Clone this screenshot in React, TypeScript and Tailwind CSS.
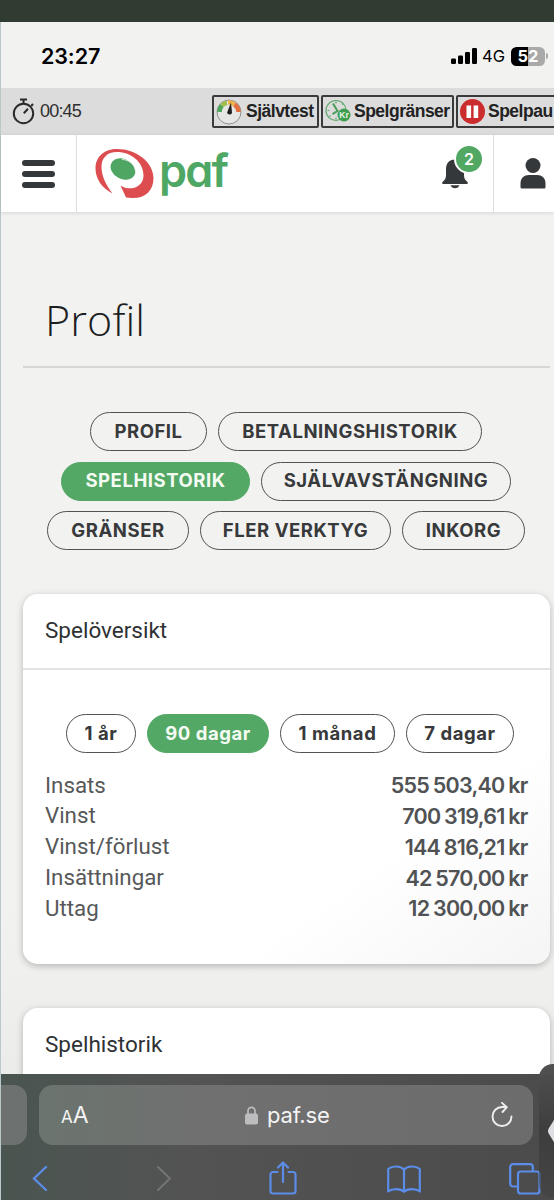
import clsx from "clsx";
import type { ReactNode } from "react";

type Pill = { label: string; width: string; active?: boolean };

const menuRows: Pill[][] = [
  [
    { label: "PROFIL", width: "w-[117px]" },
    { label: "BETALNINGSHISTORIK", width: "w-[264px]" },
  ],
  [
    { label: "SPELHISTORIK", width: "w-[189px]", active: true },
    { label: "SJÄLVAVSTÄNGNING", width: "w-[250px]" },
  ],
  [
    { label: "GRÄNSER", width: "w-[142px]" },
    { label: "FLER VERKTYG", width: "w-[191px]" },
    { label: "INKORG", width: "w-[123px]" },
  ],
];

const periods: Pill[] = [
  { label: "1 år", width: "w-[70px]" },
  { label: "90 dagar", width: "w-[122px]", active: true },
  { label: "1 månad", width: "w-[115px]" },
  { label: "7 dagar", width: "w-[108px]" },
];

const totals = [
  { label: "Insats", value: "555 503,40 kr" },
  { label: "Vinst", value: "700 319,61 kr" },
  { label: "Vinst/förlust", value: "144 816,21 kr" },
  { label: "Insättningar", value: "42 570,00 kr" },
  { label: "Uttag", value: "12 300,00 kr" },
];

function PillButton({ label, width, active }: Pill) {
  return (
    <button
      className={clsx(
        "flex h-[39px] shrink-0 items-center justify-center rounded-full border-[1.5px] font-['Inter',sans-serif] text-[18.5px] font-[650] tracking-[0.55px] whitespace-nowrap",
        width,
        active
          ? "border-[#53a866] bg-[#53a866] text-[#f3fbf3]"
          : "border-[#505352] text-[#37393b]"
      )}
    >
      {label}
    </button>
  );
}

function StatusBar() {
  return (
    <div className="flex h-[66px] items-center justify-between bg-[#f2f2f1] pt-[2px] pr-[6px] pl-[40px] text-black">
      <span className="font-['Inter',sans-serif] text-[21.5px] font-semibold tracking-[-0.1px]">
        23:27
      </span>
      <div className="flex items-center">
        <svg width="26" height="17" viewBox="0 0 26 17" fill="currentColor">
          <rect x="0" y="10.5" width="5" height="5.5" rx="1.2" />
          <rect x="7" y="7.5" width="5" height="8.5" rx="1.2" />
          <rect x="14" y="4" width="5" height="12" rx="1.2" />
          <rect x="21" y="0" width="5" height="16" rx="1.2" />
        </svg>
        <span className="ml-[5px] font-['Inter',sans-serif] text-[16.5px]">4G</span>
        <div className="ml-[6px] flex h-[19px] w-[34px] items-center justify-center rounded-[5.5px] bg-linear-to-r from-black from-50% to-[#a9a9a9] to-50% font-['Inter',sans-serif] text-[16.5px] leading-none font-bold text-white">
          52
        </div>
        <div className="ml-[1px] h-[6px] w-[2px] rounded-r-full bg-[#a9a9a9]" />
      </div>
    </div>
  );
}

function ToolButton({ icon, label, width }: { icon: ReactNode; label: string; width: string }) {
  return (
    <div
      className={clsx(
        "flex h-[33px] shrink-0 items-center gap-[4px] rounded-[2px] border-2 border-[#3a3a3a] pl-[2px] font-['Liberation_Sans',sans-serif] text-[17.5px] font-bold tracking-[-0.5px] whitespace-nowrap text-[#222]",
        width
      )}
    >
      {icon}
      {label}
    </div>
  );
}

function GaugeIcon() {
  return (
    <svg className="shrink-0" width="26" height="26" viewBox="0 0 26 26" fill="none">
      <circle cx="13" cy="13" r="12" fill="#e6e6e4" stroke="#8f8f8f" strokeWidth="1" />
      <path d="M3.5 13A9.5 9.5 0 0 1 6 6.5" stroke="#4da659" strokeWidth="4.5" />
      <path d="M6 6.5A9.5 9.5 0 0 1 11 3.8" stroke="#9fbe4d" strokeWidth="4.5" />
      <path d="M12 3.6A9.5 9.5 0 0 1 18.5 5.5" stroke="#f0b44c" strokeWidth="4.5" />
      <path d="M18.5 5.5A9.5 9.5 0 0 1 22.5 13" stroke="#e2703f" strokeWidth="4.5" />
      <path d="M15 3.5l1 10.200a2.500 2.500 0 0 1-4.900-.2z" fill="#1d1d1d" />
    </svg>
  );
}

function LimitIcon() {
  return (
    <svg className="-mr-px shrink-0" width="26" height="25" viewBox="0 0 26 25" fill="none">
      <circle cx="11" cy="11.5" r="10" stroke="#5fa86d" strokeWidth="1.2" />
      <path d="M11 2.5v2M2.5 11.5h2M11 18.5v2M17 5.5l1-1M4.5 17.5l1-1" stroke="#5fa86d" strokeWidth="1.2" />
      <path d="M8 4.500l4.500 7.500-5 3.200" stroke="#4b9d5b" strokeWidth="2" />
      <circle cx="19" cy="16" r="6.500" fill="#3f9d50" />
      <text x="19" y="19" textAnchor="middle" className="font-['Liberation_Sans',sans-serif] text-[8.5px] font-bold tracking-normal" fill="#e9f5ea">
        Kr
      </text>
    </svg>
  );
}

function PauseIcon() {
  return (
    <svg className="-mr-px shrink-0" width="25" height="25" viewBox="0 0 25 25">
      <circle cx="12.5" cy="12.5" r="12.5" fill="#cb2d2f" />
      <rect x="6.5" y="6.5" width="4.6" height="12.5" fill="#fff" />
      <rect x="13.6" y="6.5" width="4.6" height="12.5" fill="#fff" />
    </svg>
  );
}

function ToolBar() {
  return (
    <div className="flex h-[47px] items-center bg-[#dcdcdc] pl-[11px]">
      <svg className="shrink-0" width="23" height="27" viewBox="0 0 23 27" fill="none" stroke="#2a2a2a" strokeWidth="2">
        <circle cx="11.5" cy="15.5" r="9.7" />
        <path d="M8 1.5h7M11.5 1.5v4M19.2 8l1.8-2M11.8 15.2l4.2-4.4" />
      </svg>
      <span className="w-[177px] shrink-0 pl-[5px] font-['Liberation_Sans',sans-serif] text-[18px] tracking-[-0.8px] text-[#2f2f2f]">
        00:45
      </span>
      <div className="flex gap-[2px]">
        <ToolButton icon={<GaugeIcon />} label="Självtest" width="w-[107px]" />
        <ToolButton icon={<LimitIcon />} label="Spelgränser" width="w-[133px]" />
        <ToolButton icon={<PauseIcon />} label="Spelpau" width="w-[120px]" />
      </div>
    </div>
  );
}

function Logo() {
  return (
    <div className="flex items-start">
      <svg className="mt-[13px]" width="60" height="51" viewBox="0 0 60 51">
        <path
          d="M17.500 45.500C7 40 .5 31 .5 20.500C.5 8 10 1 22 1C41 1 58.500 14 58.500 30C58.500 43 50 50.500 37 50L31 49.500L25.500 37.500C29 40 33 40.500 37 40.200C44 39.500 48.500 34 48.500 27.500C48.500 14 36 4 22 4C12 4 6.500 10 6.500 19C6.500 28 11 37 17.500 45.500Z"
          fill="#dd4d4f"
        />
        <ellipse cx="28" cy="21" rx="13" ry="10" transform="rotate(28 28 21)" fill="#4fa663" />
        <path d="M27 11.500c7 0 13 5 13.500 12" fill="none" stroke="#fff" strokeWidth="0.800" />
      </svg>
      <span className="ml-[4px] font-['Inter',sans-serif] text-[45px] leading-[71px] font-[560] tracking-[-1.8px] text-[#4fa765] [font-feature-settings:'cv11']">
        paf
      </span>
    </div>
  );
}

function Header() {
  return (
    <header className="z-10 flex h-[77px] bg-white shadow-[0_1px_4px_rgba(0,0,0,0.12)]">
      <div className="flex w-[76px] flex-col items-start gap-[5.5px] border-r-[1.5px] border-[#dedede] pt-[25px] pl-[21px]">
        <div className="h-[5.5px] w-[33px] rounded-full bg-[#35383b]" />
        <div className="h-[5.5px] w-[33px] rounded-full bg-[#35383b]" />
        <div className="h-[5.5px] w-[33px] rounded-full bg-[#35383b]" />
      </div>
      <div className="flex-1 pl-[18px]">
        <Logo />
      </div>
      <div className="relative w-[53px] shrink-0 border-r-[1.5px] border-[#dedede]">
        <svg className="mt-[22px] ml-px" width="27" height="32" viewBox="0 0 27 32" fill="#35383b">
          <path d="M13 2.500C7 2.500 4 6.500 4 12v6c0 3.500-1.200 5-3 6.500-1.400 1.200-1 2.500.6 2.500h22.800c1.600 0 2-1.300.6-2.500-1.800-1.500-3-3-3-6.500v-6c0-5.500-3-9.500-9-9.500z" />
          <path d="M8.500 28.300h9c-.8 2-2.400 3-4.500 3s-3.700-1-4.500-3z" />
        </svg>
        <div className="absolute top-[9px] left-[13px] flex size-[30px] items-center justify-center rounded-full border-2 border-white bg-[#50a863] font-['Inter',sans-serif] text-[16px] font-semibold text-white">
          2
        </div>
      </div>
      <div className="w-[60px] shrink-0 pt-[23px] pl-[26px]">
        <svg width="26" height="31" viewBox="0 0 26 31" fill="#35383b">
          <circle cx="13" cy="7.500" r="7.500" />
          <path d="M.5 29v-3.500C.5 20 4 17 9 17h8c5 0 8.500 3 8.500 8.500V29c0 1-.6 1.600-1.600 1.600H2.100C1.100 30.600.5 30 .5 29z" />
        </svg>
      </div>
    </header>
  );
}

function Card({ title, className, children }: { title: string; className?: string; children?: ReactNode }) {
  return (
    <section
      className={clsx(
        "rounded-[15px] bg-linear-to-br from-white from-70% to-[#f5f5f6] shadow-[0_2px_7px_rgba(0,0,0,0.25)]",
        className
      )}
    >
      <h2 className="flex h-[76px] items-center border-b-2 border-[#e3e3e3] pb-px pl-[22.5px] font-['Roboto',sans-serif] text-[22.5px] text-[#2e3133]">
        {title}
      </h2>
      {children}
    </section>
  );
}

function Profile() {
  return (
    <main className="h-[862px] overflow-hidden bg-linear-to-b from-[#f2f2f0] from-80% to-[#ececeb] pr-[4.5px] pl-[21.5px]">
      <h1 className="flex h-[156px] items-end border-b-2 border-[#d6d7d6] pb-[19px] pl-[22.5px] font-['Open_Sans',sans-serif] text-[43px] leading-[54px] font-[340] tracking-[0.1px] text-[#1d1e1f]">
        Profil
      </h1>
      <nav className="mt-[44px] flex flex-col items-center gap-[10.5px]">
        {menuRows.map((row, i) => (
          <div key={i} className="flex gap-[11px]">
            {row.map((pill) => (
              <PillButton key={pill.label} {...pill} />
            ))}
          </div>
        ))}
      </nav>
      <Card title="Spelöversikt" className="mt-[44px] h-[370px]">
        <div className="mt-[44px] flex justify-center gap-[11px] pl-[8px]">
          {periods.map((pill) => (
            <PillButton key={pill.label} {...pill} />
          ))}
        </div>
        <dl className="mt-[17px] pr-[22px] pl-[22.5px] font-['Roboto',sans-serif] text-[22.3px] text-[#565859]">
          {totals.map((row) => (
            <div key={row.label} className="flex h-[30.8px] items-center justify-between">
              <dt>{row.label}</dt>
              <dd className="font-['Inter',sans-serif] text-[21.5px] font-[640] tracking-[-0.75px] text-[#505254] [word-spacing:-1px]">
                {row.value}
              </dd>
            </div>
          ))}
        </dl>
      </Card>
      <Card title="Spelhistorik" className="mt-[44px] h-[200px]" />
    </main>
  );
}

function BrowserBar() {
  return (
    <footer className="h-[126px] bg-linear-to-r from-[#4a5550] via-[#535353] via-35% to-[#4b4b4b]">
      <div className="flex gap-[12px] pt-[11px]">
        <div className="h-[60px] w-[26px] rounded-r-[13px] bg-[#6d716f]" />
        <div className="flex h-[60px] w-[494px] items-center rounded-[14px] bg-linear-to-r from-[#6b746e] via-[#707070] via-35% to-[#6c6c6c] pr-[20px] pl-[22px] font-['Inter',sans-serif] text-[#f4f4f4]">
          <div className="flex w-[184px] items-baseline">
            <span className="text-[17px]">A</span>
            <span className="text-[23px]">A</span>
          </div>
          <svg width="13" height="19" viewBox="0 0 13 19">
            <rect x="0" y="7.500" width="13" height="11" rx="2" fill="#bdbdbf" />
            <path d="M3 8V4.800a3.500 3.500 0 0 1 7 0V8" fill="none" stroke="#bdbdbf" strokeWidth="1.700" />
          </svg>
          <span className="ml-[9px] flex-1 text-[22px] tracking-[-0.2px]">paf.se</span>
          <svg width="22" height="26" viewBox="0 0 22 26" fill="none" stroke="#eee" strokeWidth="1.900" strokeLinecap="round" strokeLinejoin="round">
            <path d="M20.500 14.500A9.500 9.500 0 1 1 11 5h4.500" />
            <path d="M11 .9l4.700 4.400L11.500 10" />
          </svg>
        </div>
      </div>
      <div className="flex items-start pt-[16px] pl-[31px]">
        <svg width="16" height="26" viewBox="0 0 16 26" className="mt-[4px]" fill="none" stroke="#5b8de8" strokeWidth="2.300" strokeLinecap="round">
          <path d="M14 2L2 13.500 14 25" />
        </svg>
        <svg width="16" height="26" viewBox="0 0 16 26" className="mt-[4px] ml-[108px]" fill="none" stroke="#747474" strokeWidth="2" strokeLinecap="round">
          <path d="M2 2l12 11.500L2 25" />
        </svg>
        <svg width="28" height="34" viewBox="0 0 28 34" className="ml-[97px]" fill="none" stroke="#5b8de8" strokeWidth="2.200" strokeLinecap="round" strokeLinejoin="round">
          <path d="M8.500 11H4a2.500 2.500 0 0 0-2.500 2.500V30A2.500 2.500 0 0 0 4 32.500h20a2.500 2.500 0 0 0 2.500-2.500V13.500A2.500 2.500 0 0 0 24 11h-4.500" />
          <path d="M14 21V2M9 6.500l5-5 5 5" />
        </svg>
        <svg width="34" height="28" viewBox="0 0 34 28" className="mt-[4px] ml-[90px]" fill="none" stroke="#5b8de8" strokeWidth="2.200" strokeLinejoin="round">
          <path d="M17 4.500C13.500.8 5.500.4 1.200 4v22.500c4.300-3.300 12.300-3 15.800.3 3.500-3.300 11.500-3.600 15.800-.3V4C28.500.4 20.500.8 17 4.500zM17 4.500v22" />
        </svg>
        <svg width="32" height="32" viewBox="0 0 32 32" className="mt-[2px] ml-[88px]" fill="none" stroke="#5b8de8" strokeWidth="2.200">
          <path d="M9 23.500H4A2.800 2.800 0 0 1 1.200 20.700V4A2.800 2.800 0 0 1 4 1.200h17A2.800 2.800 0 0 1 23.800 4v4" />
          <rect x="9" y="8.500" width="21.500" height="22" rx="2.800" />
        </svg>
      </div>
    </footer>
  );
}

export default function App() {
  return (
    <div className="relative h-[1200px] w-[554px] overflow-hidden bg-[#f2f2f0]">
      <div className="h-[22px] bg-[#303c31]" />
      <div className="flex flex-col border-l border-[#b9c9c9]">
        <StatusBar />
        <ToolBar />
        <Header />
        <Profile />
        <BrowserBar />
      </div>
      {/* edge handle that slides over the browser bar */}
      <div className="absolute top-[1064px] left-[539px] flex h-[134px] w-[30px] items-center rounded-l-[14px] bg-linear-to-b from-[#505050] via-[#3c3c3c]/90 to-[#3c3c3c]/40 pl-[9px]">
        <svg className="shrink-0" width="20" height="34" viewBox="0 0 20 34" fill="#dedfe3">
          <path d="M9 1Q12-2 20 0V34Q12 36 9 33L1 20Q-1 17 1 14z" />
        </svg>
      </div>
    </div>
  );
}
